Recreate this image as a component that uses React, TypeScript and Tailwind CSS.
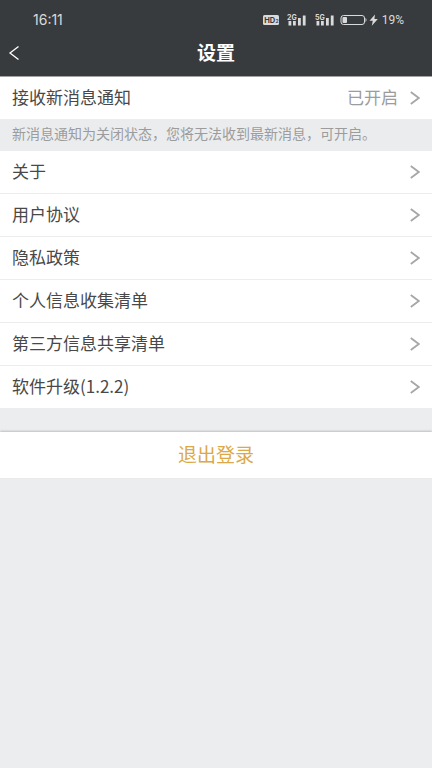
import type { ReactNode } from 'react';

interface SettingRowProps {
  label: string;
  value?: string;
}

const menuItems = [
  '关于',
  '用户协议',
  '隐私政策',
  '个人信息收集清单',
  '第三方信息共享清单',
  '软件升级(1.2.2)',
];

function ChevronRight() {
  return (
    <svg width="10" height="14" viewBox="0 0 10 14" fill="none" stroke="#a6a6a6" strokeWidth="1.8" aria-hidden="true">
      <path d="M0.8 1 L8.8 7 L0.8 13" />
    </svg>
  );
}

function SettingRow({ label, value }: SettingRowProps) {
  return (
    <button className="flex h-[42px] w-full items-center bg-white px-3 text-left text-[17px] leading-6 text-[#484848]">
      <span className="flex-1 pb-0.5">{label}</span>
      {value && <span className="mr-3 pb-0.5 text-[#9c9c9c]">{value}</span>}
      <ChevronRight />
    </button>
  );
}

function Signal({ children }: { children: ReactNode }) {
  return (
    <svg width="20" height="14" viewBox="0 0 20 14" fill="#d9dadb" aria-hidden="true">
      <text x="0" y="7" fontSize="7" fontWeight="700" fontFamily="Inter, sans-serif">
        {children}
      </text>
      <rect x="1.5" y="8" width="2.8" height="4.5" />
      <rect x="6" y="8" width="2.8" height="4.5" />
      <rect x="11" y="5" width="2.8" height="7.5" />
      <rect x="15.8" y="2.5" width="2.8" height="10" />
    </svg>
  );
}

function StatusBar() {
  return (
    <div className="flex h-7 items-end justify-between pr-7 pl-[33px] font-[Inter,sans-serif] text-sm leading-4 text-[#d9dadb]">
      <span>16:11</span>
      <div className="flex h-4 items-center">
        <svg width="16" height="10" viewBox="0 0 16 10" className="mr-2" aria-hidden="true">
          <rect width="16" height="10" rx="1.5" fill="#d9dadb" />
          <text x="1.2" y="7.8" fontSize="7.5" fontWeight="700" fontFamily="Inter, sans-serif" fill="#383b3d">
            HD
          </text>
          <text x="12.4" y="7.8" fontSize="5" fontWeight="700" fontFamily="Inter, sans-serif" fill="#383b3d">
            2
          </text>
        </svg>
        <Signal>2G</Signal>
        <span className="w-2" />
        <Signal>5G</Signal>
        <svg width="39" height="12" viewBox="0 0 39 12" className="mr-1 ml-1" aria-hidden="true">
          <rect x="2" y="1.5" width="23.5" height="9" rx="2.5" fill="none" stroke="#d9dadb" />
          <rect x="3.5" y="3" width="4.5" height="6" rx="1" fill="#d9dadb" />
          <path d="M26.5 3.8 Q28.5 6 26.5 8.2 Z" fill="#d9dadb" />
          <path d="M36 0.5 L30.5 6.8 H33.8 L32.8 11.8 L38.8 5 H35.4 Z" fill="#d9dadb" />
        </svg>
        <span className="font-[Roboto,sans-serif] text-xs leading-4">19%</span>
      </div>
    </div>
  );
}

export default function App() {
  return (
    <div className="min-h-screen bg-[#ecedef] font-['Noto_Sans_CJK_SC',sans-serif]">
      <header className="border-b border-[#a3a3a5] bg-[#383b3d] text-white">
        <StatusBar />
        <div className="grid h-12 grid-cols-[1fr_auto_1fr] items-center px-2">
          <button aria-label="返回" className="flex h-8 w-8 items-center">
            <svg width="12" height="16" viewBox="0 0 12 16" fill="none" stroke="#ffffff" strokeWidth="1.3" aria-hidden="true">
              <path d="M10.5 2.5 L2 9 L10.5 15.5" />
            </svg>
          </button>
          <h1 className="text-[19px] leading-6 font-bold">设置</h1>
        </div>
      </header>

      <main>
        <SettingRow label="接收新消息通知" value="已开启" />
        <p className="bg-[#ebecee] px-3 pt-1 pb-2 text-sm leading-5 text-[#9c9c9c]">
          新消息通知为关闭状态，您将无法收到最新消息，可开启。
        </p>
        <ul className="divide-y divide-[#ececec]">
          {menuItems.map((item) => (
            <li key={item}>
              <SettingRow label={item} />
            </li>
          ))}
        </ul>

        <button className="mt-6 h-[46px] w-full bg-white pb-0.5 text-[19px] leading-6 text-[#dba947] shadow-[0_-1px_2px_rgba(0,0,0,0.2)]">
          退出登录
        </button>
      </main>
    </div>
  );
}
